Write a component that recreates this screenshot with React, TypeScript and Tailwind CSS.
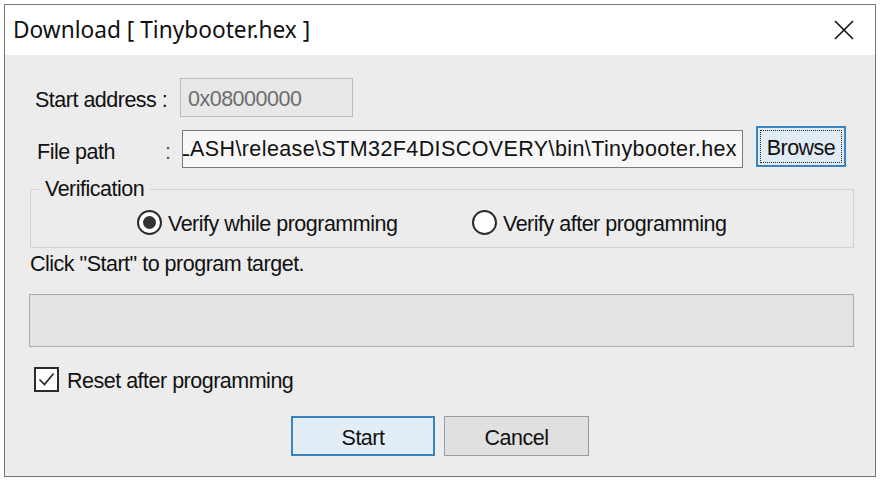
import React from 'react';

const font = { fontFamily: '"Liberation Sans", Arial, sans-serif' };

const Radio = ({ checked, label, width }: { checked?: boolean; label: string; width?: string }) => (
  <label className={`flex items-center ${width ?? ''}`}>
    <span className="w-[25px] h-[25px] rounded-full border-2 border-[#2b2b2b] bg-white flex items-center justify-center shrink-0">
      {checked && <span className="w-[13px] h-[13px] rounded-full bg-[#333333]" />}
    </span>
    <span className="ml-[6px] pt-[2px]">{label}</span>
  </label>
);

const App = () => {
  return (
    <div
      className="w-[880px] h-[482px] bg-white pt-[4px] pl-[4px] text-[21.5px] leading-[24px] tracking-[-0.5px] text-[#111111]"
      style={font}
    >
      <div className="w-[872px] h-[473px] border border-[#767676] flex flex-col bg-[#ececec]">
        {/* Title bar */}
        <div className="h-[50px] bg-white flex items-center justify-between pl-[8px] pr-[21px] shrink-0">
          <span
            className="text-[22.7px] tracking-normal text-[#111111]"
            style={{ fontFamily: '"Noto Sans", "Open Sans", sans-serif' }}
          >
            Download [ Tinybooter.hex ]
          </span>
          <svg width="20" height="20" viewBox="0 0 20 20">
            <path d="M1 1 L19 19 M19 1 L1 19" stroke="#111" strokeWidth="1.6" fill="none" />
          </svg>
        </div>

        {/* Body */}
        <div className="flex-1 flex flex-col">
          {/* Start address */}
          <div className="mt-[23px] flex items-center pl-[30px] h-[39px]">
            <span className="w-[145px] pt-[4px]">Start address :</span>
            <div className="w-[173px] h-[39px] border border-[#bcbcbc] bg-[#e8e8e8] text-[#6d6d6d] pl-[7px] pt-[2px] flex items-center">
              0x08000000
            </div>
          </div>

          {/* File path */}
          <div className="mt-[9px] flex items-start pl-[32px] h-[41px]">
            <span className="w-[128px] h-[38px] mt-[4px] pt-[6px] flex items-center">File path</span>
            <span className="w-[17px] h-[38px] mt-[4px] pt-[6px] flex items-center text-[#555]">:</span>
            <div className="w-[561px] h-[38px] mt-[4px] border border-[#7a7a7a] bg-[#f7f7f7] overflow-hidden flex items-center justify-end pr-[5px] whitespace-nowrap">
              <span className="tracking-[0.4px]">FLASH\release\STM32F4DISCOVERY\bin\Tinybooter.hex</span>
            </div>
            <button className="ml-[13px] w-[90px] h-[41px] border-2 border-[#3a84c1] bg-[#e1ebf4] p-[2px]">
              <span className="w-full h-full border border-dotted border-[#222] flex items-center justify-center pt-[2px]">
                Browse
              </span>
            </button>
          </div>

          {/* Verification */}
          <fieldset className="mt-[10px] ml-[25px] w-[824px] h-[71px] border border-[#d3d3d3]">
            <legend className="ml-[8px] px-[6px] leading-[24px]">Verification</legend>
            <div className="mt-[9px] h-[25px] flex items-center pl-[106px]">
              <Radio checked label="Verify while programming" width="w-[335px]" />
              <Radio label="Verify after programming" />
            </div>
          </fieldset>

          <div className="mt-[4px] pl-[25px]">Click "Start" to program target.</div>

          {/* Progress */}
          <div className="mt-[18px] ml-[24px] w-[825px] h-[53px] border border-[#ababab] bg-[#e3e3e3]" />

          {/* Reset */}
          <label className="mt-[20px] pl-[29px] h-[25px] flex items-center">
            <span className="w-[25px] h-[25px] border-2 border-[#2b2b2b] bg-white flex items-center justify-center shrink-0">
              <svg width="19" height="19" viewBox="0 0 19 19">
                <path d="M2.5 9.5 L7.5 14.5 L16.5 3.5" stroke="#222" strokeWidth="1.6" fill="none" />
              </svg>
            </span>
            <span className="ml-[8px] pt-[2px]">Reset after programming</span>
          </label>

          {/* Buttons */}
          <div className="mt-[24px] flex justify-center gap-[9px]">
            <button className="w-[144px] h-[40px] border-2 border-[#3a84c1] bg-[#e2edf6] pt-[3px]">Start</button>
            <button className="w-[145px] h-[40px] border border-[#9c9c9c] bg-[#e0e0e0] pt-[3px]">Cancel</button>
          </div>
        </div>
      </div>
    </div>
  );
};

export default App;
